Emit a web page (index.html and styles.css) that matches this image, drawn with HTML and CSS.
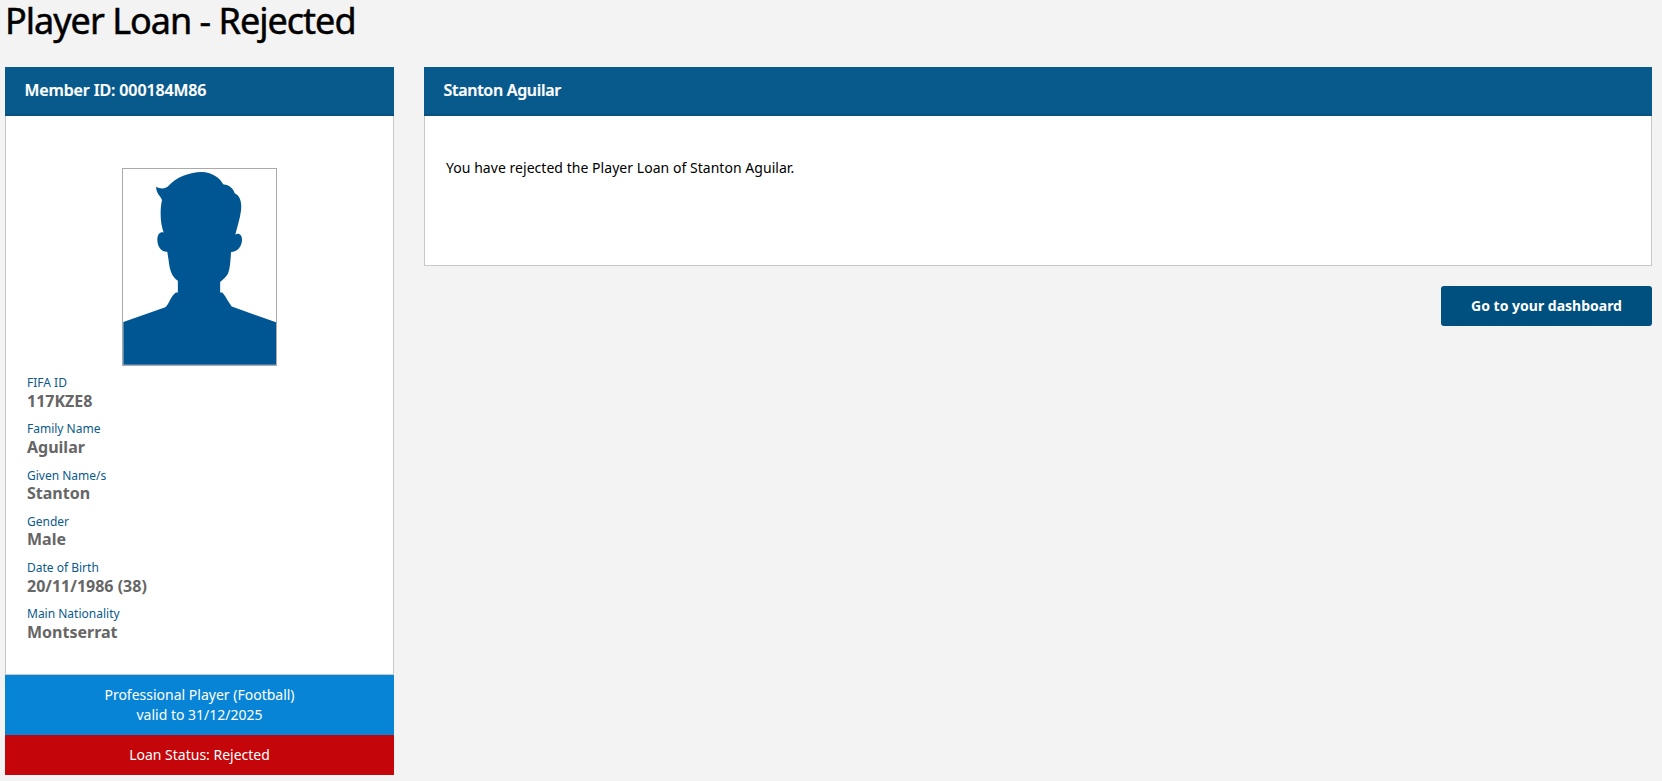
FILE: index.html
```html
<!DOCTYPE html>
<html lang="en">
<head>
<meta charset="utf-8">
<title>Player Loan - Rejected</title>
<link rel="stylesheet" href="styles.css">
</head>
<body>
<h1 class="page-title">Player Loan - Rejected</h1>
<div class="layout">
  <aside class="member">
    <div class="panel-head panel-head-member">Member ID: 000184M86</div>
    <div class="member-body">
      <div class="photo">
        <svg viewBox="37 25 463 591" width="153" height="196" aria-hidden="true"><path fill="#005693" d="M38 487L165 442C178 432 180 410 197 398L203 398L203 362C185 350 178 330 175 300L171 274C150 275 140 255 141 235C142 220 150 213 160 216C150 190 148 150 155 118C150 105 138 100 137 78C150 85 165 85 175 75C195 50 240 33 275 33C305 33 330 50 340 70C360 72 372 85 375 97C392 105 397 125 394 150C391 175 382 200 377 222C390 215 398 225 397 240C396 262 380 275 364 275C362 300 362 320 355 340C350 350 340 358 331 366L331 398L337 398C345 405 355 425 366 440L500 488L500 616L38 616Z"/></svg>
      </div>
      <dl class="facts">
        <div class="fact"><dt>FIFA ID</dt><dd>117KZE8</dd></div>
        <div class="fact"><dt>Family Name</dt><dd>Aguilar</dd></div>
        <div class="fact"><dt>Given Name/s</dt><dd>Stanton</dd></div>
        <div class="fact"><dt>Gender</dt><dd>Male</dd></div>
        <div class="fact"><dt>Date of Birth</dt><dd>20/11/1986 (38)</dd></div>
        <div class="fact"><dt>Main Nationality</dt><dd>Montserrat</dd></div>
      </dl>
    </div>
    <div class="strip strip-blue">Professional Player (Football)<br>valid to 31/12/2025</div>
    <div class="strip strip-red">Loan Status: Rejected</div>
  </aside>
  <main class="content">
    <div class="panel-head">Stanton Aguilar</div>
    <div class="content-body">You have rejected the Player Loan of Stanton Aguilar.</div>
    <div class="actions"><a class="btn" href="#">Go to your dashboard</a></div>
  </main>
</div>
</body>
</html>
```
FILE: styles.css
```css
* { box-sizing: border-box; }
html, body { margin: 0; height: 100%; }
body {
  background: #f3f3f3;
  color: #000;
  font-family: "Noto Sans", sans-serif;
  font-size: 14px;
  padding: 0 10px 0 5px;
  overflow: hidden;
}
.page-title {
  margin: 0;
  height: 67px;
  font-size: 36px;
  line-height: 42px;
  font-weight: 400;
  letter-spacing: -1px;
  -webkit-text-stroke: 0.5px #000;
}
.layout { display: flex; gap: 30px; align-items: flex-start; }
.member { width: 389px; flex: none; }
.content { flex: 1; }
.panel-head {
  height: 49px;
  background: #085a8c;
  border-bottom: 2px solid #07527f;
  color: #fff;
  font-size: 16px;
  font-weight: 600;
  line-height: 46px;
  padding-left: 19.5px;
  letter-spacing: -0.3px;
  -webkit-text-stroke: 0.2px #fff;
}
.panel-head-member { letter-spacing: -0.13px; }
.member-body {
  height: 559px;
  background: #fff;
  border: 1px solid #c8c8c8;
  border-top: 0;
  padding: 52px 21px 0;
}
.photo {
  width: 155px;
  height: 198px;
  margin: 0 auto;
  border: 1px solid #aaa;
  background: #fff;
}
.photo svg { display: block; }
.facts { margin: 8px 0 0; }
.fact { height: 46.25px; }
.fact dt { font-size: 12px; line-height: 17px; color: #0a5a8c; }
.fact dd { margin: -0.4px 0 0; font-size: 16px; line-height: 20px; font-weight: 700; color: #666; }
.strip { color: #fff; text-align: center; line-height: 20px; }
.strip-blue { height: 60px; padding-top: 10px; background: #0884d6; }
.strip-red { height: 40px; padding-top: 10px; background: #c4060a; }
.content-body {
  height: 150px;
  background: #fff;
  border: 1px solid #c8c8c8;
  border-top: 0;
  padding: 42px 21px 0;
  line-height: 20px;
  letter-spacing: 0.04px;
}
.actions { display: flex; justify-content: flex-end; margin-top: 20px; }
.btn {
  width: 211px;
  height: 40px;
  background: #00507f;
  color: #fff;
  border-radius: 3px;
  font-weight: 700;
  line-height: 39px;
  text-align: center;
  text-decoration: none;
}
```
